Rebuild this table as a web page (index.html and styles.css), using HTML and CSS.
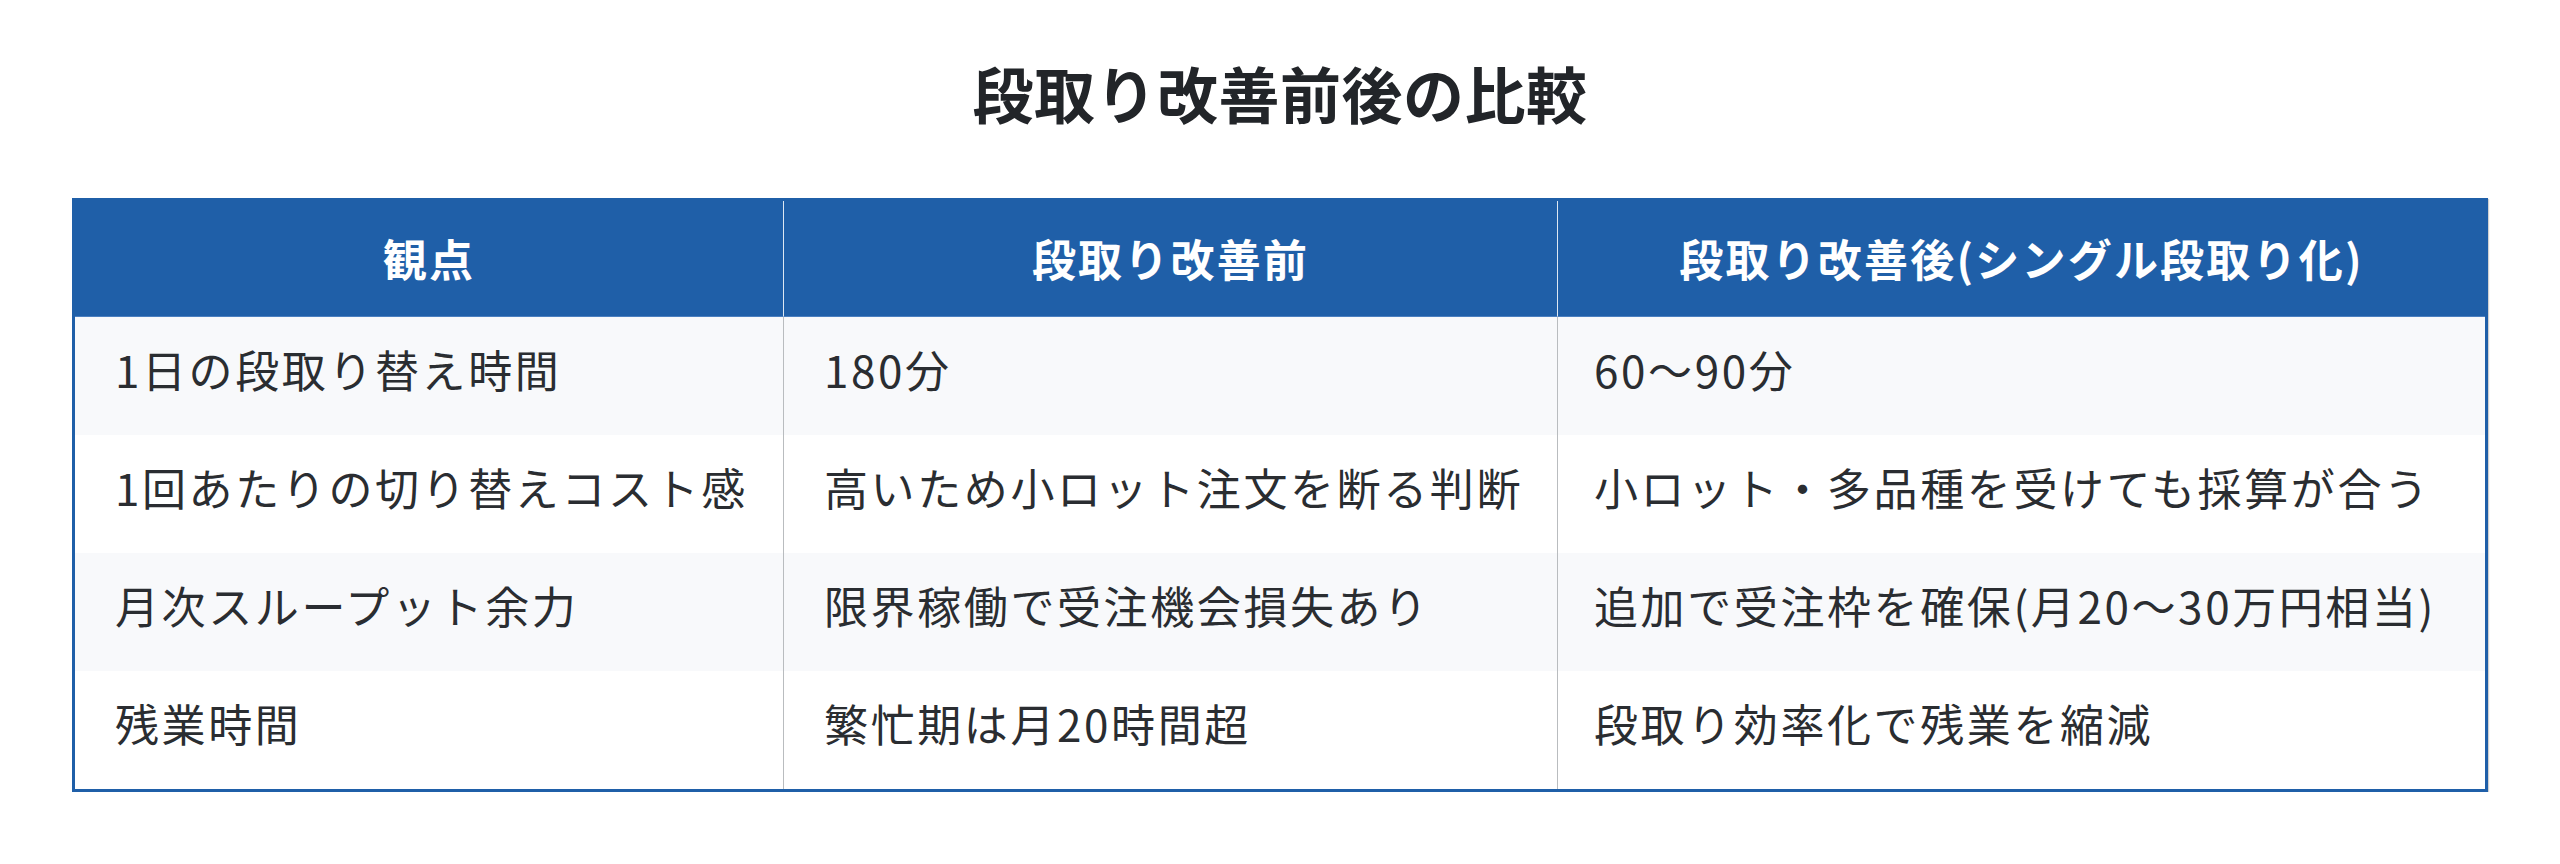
FILE: index.html
```html
<!DOCTYPE html>
<html lang="ja">
<head>
<meta charset="utf-8">
<title>段取り改善前後の比較</title>
<link rel="stylesheet" href="styles.css">
</head>
<body>
<main class="page">
  <h2 class="title">段取り改善前後の比較</h2>
  <table class="compare">
    <colgroup>
      <col class="c1">
      <col class="c2">
      <col class="c3">
    </colgroup>
    <thead>
      <tr>
        <th>観点</th>
        <th>段取り改善前</th>
        <th>段取り改善後(シングル段取り化)</th>
      </tr>
    </thead>
    <tbody>
      <tr>
        <td>1日の段取り替え時間</td>
        <td>180分</td>
        <td>60〜90分</td>
      </tr>
      <tr>
        <td>1回あたりの切り替えコスト感</td>
        <td>高いため小ロット注文を断る判断</td>
        <td>小ロット・多品種を受けても採算が合う</td>
      </tr>
      <tr>
        <td>月次スループット余力</td>
        <td>限界稼働で受注機会損失あり</td>
        <td>追加で受注枠を確保(月20〜30万円相当)</td>
      </tr>
      <tr>
        <td>残業時間</td>
        <td>繁忙期は月20時間超</td>
        <td>段取り効率化で残業を縮減</td>
      </tr>
    </tbody>
  </table>
</main>
</body>
</html>
```

FILE: styles.css
```css
html, body {
  margin: 0;
  padding: 0;
  background: #ffffff;
}

body {
  font-family: "Noto Sans CJK JP", "Noto Sans", sans-serif;
  color: #2b2b2b;
}

.page {
  padding: 0 72px;
}

.title {
  margin: 0;
  padding: 46px 0 58px;
  line-height: 94px;
  font-size: 61px;
  font-weight: 700;
  text-align: center;
  color: #222529;
  letter-spacing: 0.5px;
}

.compare {
  width: 2416px;
  table-layout: fixed;
  border-collapse: separate;
  border-spacing: 0;
  border: 3px solid #1f5fa8;
  box-shadow: 1px 1px 1px rgba(0, 0, 0, 0.18);
  font-size: 44px;
  letter-spacing: 2.6px;
}

.c1 { width: 709px; }
.c2 { width: 774px; }
.c3 { width: 927px; }

.compare th {
  height: 115px;
  padding: 0 20px;
  background: #1f5fa8;
  color: #ffffff;
  font-weight: 700;
  text-align: center;
  vertical-align: middle;
  line-height: 1.4;
  letter-spacing: 2.2px;
  border-right: 1px solid rgba(255, 255, 255, 0.85);
  border-bottom: 1px solid #4a7fc0;
}

.compare th:last-child {
  border-right: 0;
}

.compare td {
  height: 118px;
  padding: 0 20px 14px 40px;
  box-sizing: border-box;
  text-align: left;
  vertical-align: middle;
  line-height: 1.5;
  font-weight: 400;
  color: #2a2d31;
  border-right: 1px solid #b9bcbf;
  white-space: nowrap;
}

.compare td:last-child {
  border-right: 0;
  padding-left: 36px;
}

.compare tbody tr:nth-child(odd) td {
  background: #f8f9fb;
}

.compare tbody tr:nth-child(even) td {
  background: #ffffff;
}
```
